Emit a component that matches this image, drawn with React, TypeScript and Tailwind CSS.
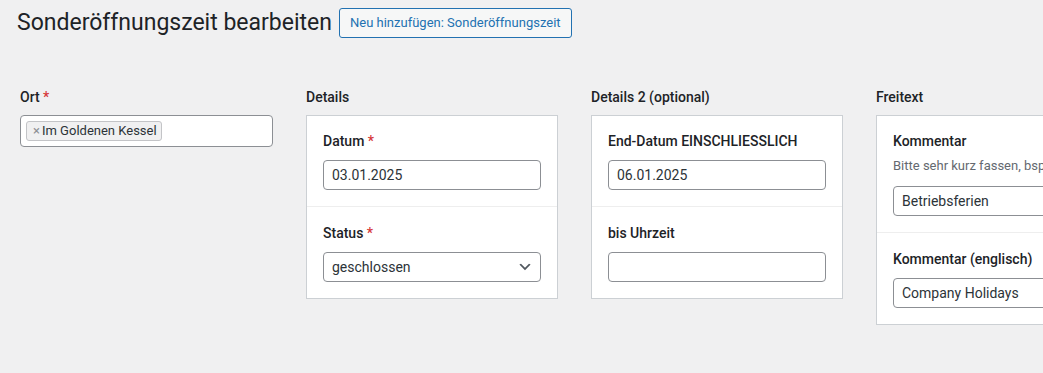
import React from 'react';

const font = { fontFamily: 'Roboto, "Noto Sans", Arial, sans-serif' };

function Req() {
  return <span className="text-[#d63638]"> *</span>;
}

function FieldLabel({ text, required }: { text: string; required?: boolean }) {
  return (
    <div className="text-[14px] leading-[20px] font-medium text-[#1d2327]">
      {text}
      {required && <Req />}
    </div>
  );
}

function TextBox({ value }: { value: string }) {
  return (
    <div className="h-[30px] w-full rounded-[4px] border border-[#8c8f94] bg-white px-[8px] text-[14px] leading-[28px] text-[#2c3338]">
      {value}
    </div>
  );
}

function SelectBox({ value }: { value: string }) {
  return (
    <div className="flex h-[30px] w-full items-center justify-between rounded-[4px] border border-[#8c8f94] bg-white pl-[8px] pr-[7px] text-[14px] text-[#2c3338]">
      <span>{value}</span>
      <svg width="16" height="16" viewBox="0 0 20 20">
        <path d="M5 6l5 5 5-5 2 1-7 7-7-7 2-1z" fill="#50575e" />
      </svg>
    </div>
  );
}

function Group({ title, children }: { title: string; children: React.ReactNode }) {
  return (
    <div className="w-[252px] shrink-0">
      <div className="mb-[8px] text-[14px] leading-[20px] font-medium text-[#1d2327]">{title}</div>
      <div className="border border-[#ccd0d4] bg-white">{children}</div>
    </div>
  );
}

export default function App() {
  return (
    <div className="min-h-[373px] w-full overflow-hidden bg-[#f0f0f1]" style={font}>
      <div className="flex items-center pl-[17px] pt-[8px]">
        <h1 className="text-[23px] leading-[30px] font-normal text-[#1d2327]">Sonderöffnungszeit bearbeiten</h1>
        <button className="ml-[7px] h-[30px] rounded-[3px] border border-[#2271b1] bg-[#f6f7f7] px-[10px] text-[13px] text-[#2271b1]">
          Neu hinzufügen: Sonderöffnungszeit
        </button>
      </div>

      <div className="mt-[49px] flex gap-[33px] pl-[20px]">
        <div className="w-[253px] shrink-0">
          <div className="mb-[8px]">
            <FieldLabel text="Ort" required />
          </div>
          <div className="flex h-[32px] items-center rounded-[4px] border border-[#8c8f94] bg-white px-[5px]">
            <span className="flex h-[20px] items-center rounded-[3px] border border-[#c3c4c7] bg-[#f0f0f1] pl-[6px] pr-[4px] text-[13px] text-[#2c3338]">
              <span className="mr-[2px] text-[#8c8f94]">×</span>
              Im Goldenen Kessel
            </span>
          </div>
        </div>

        <Group title="Details">
          <div className="px-[16px] pt-[15px] pb-[16px]">
            <div className="mb-[9px]">
              <FieldLabel text="Datum" required />
            </div>
            <TextBox value="03.01.2025" />
          </div>
          <div className="border-t border-[#eeeeee] px-[16px] pt-[16px] pb-[16px]">
            <div className="mb-[9px]">
              <FieldLabel text="Status" required />
            </div>
            <SelectBox value="geschlossen" />
          </div>
        </Group>

        <Group title="Details 2 (optional)">
          <div className="px-[16px] pt-[15px] pb-[16px]">
            <div className="mb-[9px]">
              <FieldLabel text="End-Datum EINSCHLIESSLICH" />
            </div>
            <TextBox value="06.01.2025" />
          </div>
          <div className="border-t border-[#eeeeee] px-[16px] pt-[16px] pb-[16px]">
            <div className="mb-[9px]">
              <FieldLabel text="bis Uhrzeit" />
            </div>
            <TextBox value="" />
          </div>
        </Group>

        <Group title="Freitext">
          <div className="px-[16px] pt-[15px] pb-[16px]">
            <FieldLabel text="Kommentar" />
            <div className="mt-[5px] mb-[10px] whitespace-nowrap text-[13px] leading-[20px] text-[#646970]">
              Bitte sehr kurz fassen, bspw. Betriebsferien
            </div>
            <TextBox value="Betriebsferien" />
          </div>
          <div className="border-t border-[#eeeeee] px-[16px] pt-[16px] pb-[16px]">
            <div className="mb-[9px]">
              <FieldLabel text="Kommentar (englisch)" />
            </div>
            <TextBox value="Company Holidays" />
          </div>
        </Group>
      </div>
    </div>
  );
}
